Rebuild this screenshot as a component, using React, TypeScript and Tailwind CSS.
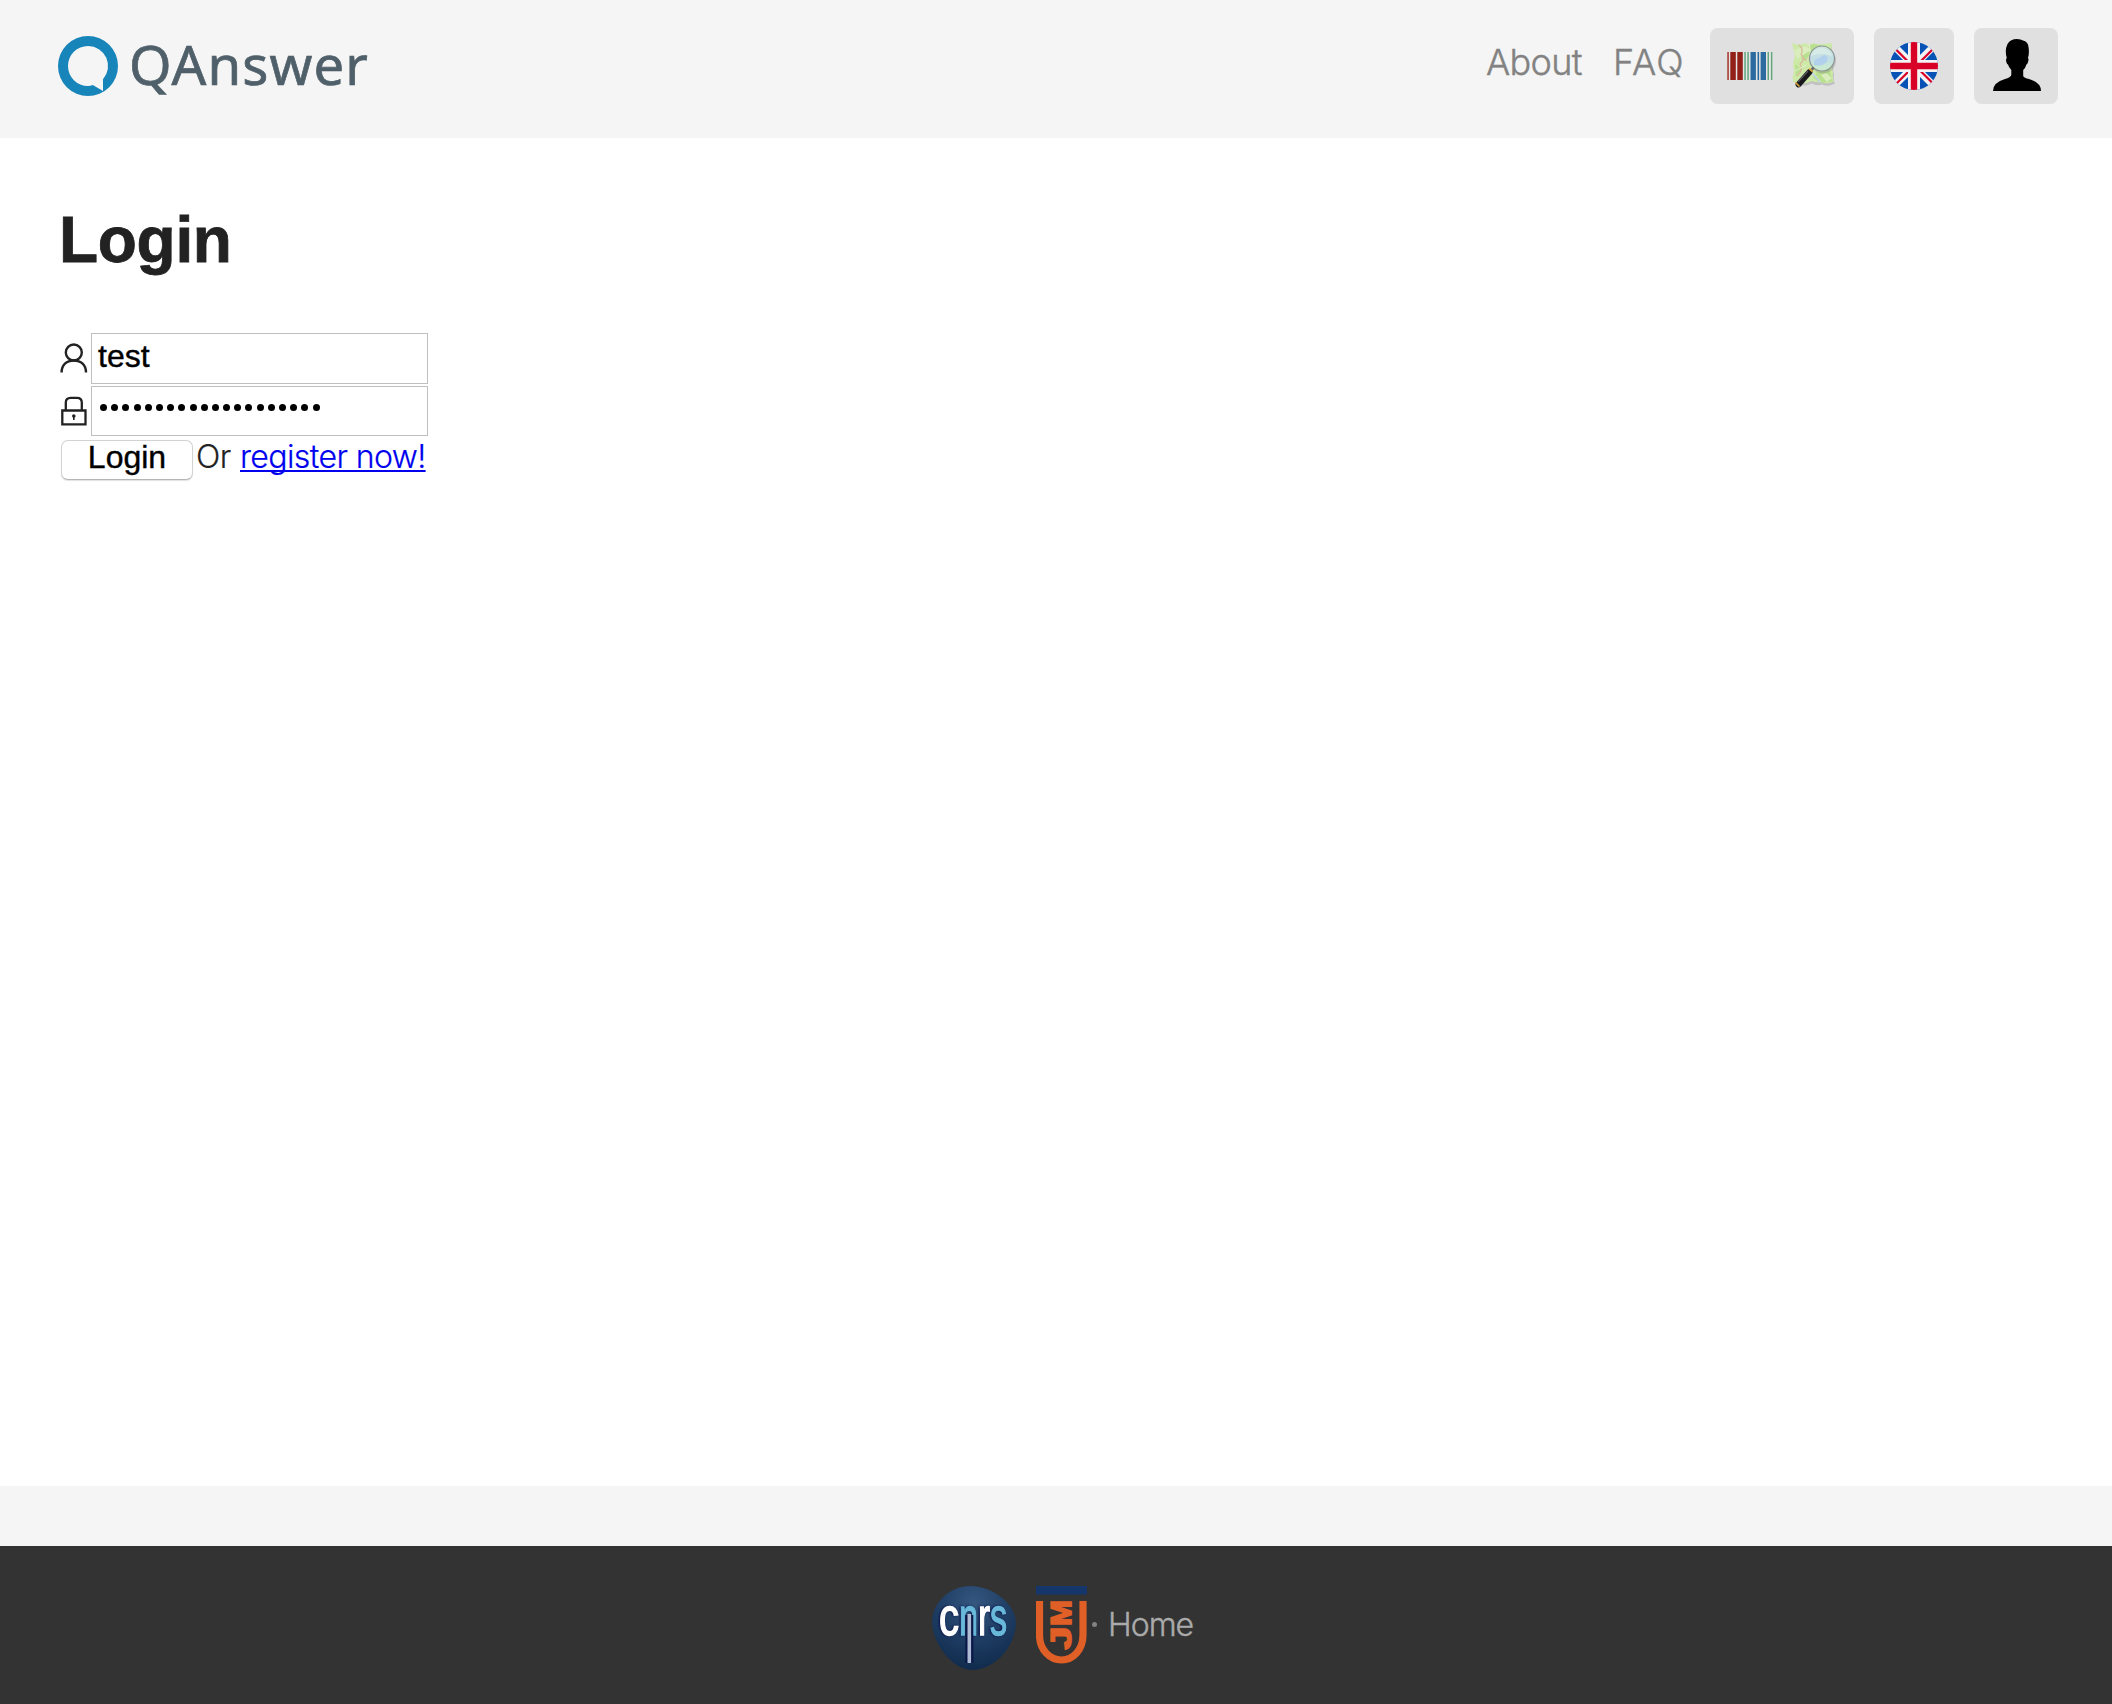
import React from 'react';

function Logo() {
  return (
    <div className="flex items-start">
      <svg className="h-[60px] w-[60px]" viewBox="0 0 60 60">
        <path
          fillRule="evenodd"
          fill="#1785b9"
          d="M30 0a30 30 0 1 1 0 60a30 30 0 0 1 0-60ZM30 10A20 20 0 0 0 30 50Q32.5 50 34.8 49L45 55V43.3A20 20 0 0 0 30 10Z"
        />
      </svg>
      <span className="ml-[11px] font-['Noto_Sans'] text-[54.5px] leading-[56px] tracking-[1.1px] text-[#50606a] [-webkit-text-stroke:0.7px_#50606a]">
        QAnswer
      </span>
    </div>
  );
}

const BARS: [number, number, string][] = [
  [0, 1.5, '#a3302a'],
  [3, 5.5, '#921f18'],
  [10, 5.5, '#921f18'],
  [17, 1.5, '#62a67c'],
  [20, 1.5, '#62a67c'],
  [23.2, 5.4, '#2b6b9f'],
  [30.2, 1.6, '#2b6b9f'],
  [33.3, 5.4, '#2b6b9f'],
  [40.2, 1.5, '#62a67c'],
  [43.6, 1.5, '#62a67c'],
];

function Barcode() {
  return (
    <svg className="h-[28px] w-[46px]" viewBox="0 0 46 28">
      <rect width="46" height="28" fill="#e6e6e6" />
      {BARS.map(([x, w, c]) => (
        <rect key={x} x={x + 0.3} width={w} height="28" fill={c} />
      ))}
    </svg>
  );
}

function MapIcon() {
  return (
    <svg className="h-[48px] w-[48px]" viewBox="0 0 48 48">
      <defs>
        <linearGradient id="lens" x1="0" y1="0" x2="0" y2="1">
          <stop offset="0" stopColor="#cfe6dd" />
          <stop offset=".5" stopColor="#c2dde4" />
          <stop offset="1" stopColor="#ccefcb" />
        </linearGradient>
      </defs>
      <path d="M2 3Q8 4 12 2Q17 4 21 2Q26 5 31 3L40 2Q39 10 42 16Q40 24 42 31Q41 37 43 40Q36 44 30 41Q24 43 20 40Q12 44 4 41Q2 35 4 29Q1 20 4 14Z" fill="#888" opacity=".35" transform="translate(0 1.5)" />
      <path d="M0 1Q8 4 13 1Q17 4 21 1Q26 4 31 2L40 1Q39 10 41 16Q39 24 41 31Q40 37 42 39Q36 43 30 40Q24 41 20 39Q12 43 1 40Q0 35 2 29Q0 20 3 14Z" fill="#cde9a8" />
      <path d="M20 2L30 3L13 19L8 13ZM3 22L10 27L4 35ZM25 30L37 27L41 39L30 41L21 36Z" fill="#b9e08f" />
      <path d="M2 8L14 4L19 8L5 17ZM29 33L34 31L40 36L35 40Z" fill="#d9edbd" />
      <path d="M7 3Q12 7 9 12Q14 17 8 22Q12 28 5 34M10 16Q15 20 17 15" fill="none" stroke="#d9b99c" strokeWidth="1.2" />
      <path d="M17 2Q20 13 15 18M21 31L29 40M3 29L14 23" fill="none" stroke="#e4f0cf" strokeWidth="1" />
      <path d="M19 30L28 40" stroke="#b9cfe8" strokeWidth="1.5" />
      <circle cx="31" cy="18.5" r="13" fill="#777" opacity=".3" />
      <circle cx="30" cy="16.5" r="12.5" fill="url(#lens)" stroke="#8d9594" strokeWidth="1.2" />
      <path d="M22 19Q25 16 28 16Q32 11 35 14Q37 19 32 22Q28 25 22 23Z" fill="#abccf0" opacity=".8" />
      <path d="M19 14Q21 6 30 6Q38 7 40 14Q30 10 19 14Z" fill="#e0f1ec" opacity=".6" />
      <path d="M18 30L21.5 25.5" stroke="#666" strokeWidth="2.6" />
      <path d="M6.5 42.5L17.5 30" stroke="#17171c" strokeWidth="5.8" strokeLinecap="round" />
      <path d="M6 40L16 29" stroke="#57575d" strokeWidth="1.2" />
      <path d="M3.5 40.5L7.5 44.5M17 26.5L20.5 29.5" stroke="#d8a73c" strokeWidth="1.7" />
    </svg>
  );
}

function Flag() {
  return (
    <svg className="h-[48px] w-[48px]" viewBox="0 0 48 48">
      <clipPath id="disc"><circle cx="24" cy="24" r="24" /></clipPath>
      <g clipPath="url(#disc)">
        <rect width="48" height="48" fill="#0753b5" />
        <path d="M4 4L44 44M44 4L4 44" stroke="#f3f3f3" strokeWidth="7" />
        <path d="M6.5 8L22 23.5M44 6L27 23M27 25.5L44 42.5M4 44L21 27" stroke="#d80027" strokeWidth="2.2" />
        <path d="M24 0V48M0 24H48" stroke="#f3f3f3" strokeWidth="12" />
        <path d="M24 0V48M0 24H48" stroke="#d80027" strokeWidth="6.4" />
      </g>
    </svg>
  );
}

function Silhouette() {
  return (
    <svg className="h-[52px] w-[48px]" viewBox="0 0 48 52">
      <path d="M24 0Q28 0 30 1.5Q35 2.5 35.5 8Q36.5 14 35 19Q36 20 35 23Q34.5 25 33.4 25.5Q32.5 29 30.2 31V37Q31 39 36 40Q48 43.5 48 52H0Q0 43.5 12 40Q17.5 38.5 18.3 36V31Q15.8 28.5 15 25.5Q13.7 25 13.2 22.5Q12.7 20 13.8 19Q11.5 11 14.5 5Q17.5 0 24 0Z" />
    </svg>
  );
}

function Header() {
  return (
    <header className="flex h-[138px] items-start justify-between bg-[#f5f5f5] pl-[58px] pr-[54px]">
      <div className="pt-9"><Logo /></div>
      <div className="flex pt-7">
        <nav className="flex pt-[10px] font-['Inter'] text-[36px] leading-[48px] font-light text-[#828282] [-webkit-text-stroke:0.4px_#828282]">
          <a className="w-[127px] tracking-[-0.7px]">About</a>
          <a className="w-[97px] tracking-[1.1px]">FAQ</a>
        </nav>
        <div className="flex h-[76px] w-[144px] items-center rounded-lg bg-[#e0e0e0] pl-[17px]">
          <Barcode />
          <div className="ml-[19px]"><MapIcon /></div>
        </div>
        <div className="ml-5 flex h-[76px] w-[80px] items-center justify-center rounded-lg bg-[#e0e0e0]"><Flag /></div>
        <div className="ml-5 flex h-[76px] w-[84px] items-start rounded-lg bg-[#e0e0e0] pt-[11px] pl-[19px]"><Silhouette /></div>
      </div>
    </header>
  );
}

function UserIcon() {
  return (
    <svg className="h-[30px] w-[28px]" viewBox="0 0 28 30" fill="none" stroke="#222" strokeWidth="2.4">
      <circle cx="13.8" cy="9.5" r="8" />
      <path d="M1.6 29.5C1.6 22 6.5 17.5 13.8 17.5S26 22 26 29.5" />
    </svg>
  );
}

function LockIcon() {
  return (
    <svg className="h-[30px] w-[28px]" viewBox="0 0 28 30" fill="none" stroke="#222" strokeWidth="2.3">
      <path d="M2.3 14.5H25.5V28.3H2.3Z" />
      <path d="M5.8 14V6.5Q5.8 1.8 10.5 1.8H17Q21.8 1.8 21.8 6.5V14" />
      <circle cx="13.8" cy="20" r="1.8" fill="#222" stroke="none" />
      <path d="M13.8 20V24" strokeWidth="1.6" />
    </svg>
  );
}

function LoginForm() {
  return (
    <main className="h-[1348px] bg-white pl-[60px]">
      <h1 className="-ml-px pt-[70px] font-['Liberation_Sans'] text-[64px] leading-[64px] font-bold tracking-[-0.3px] text-[#222] [-webkit-text-stroke:0.8px_#222]">Login</h1>
      <div className="mt-[61px] flex h-[51px]">
        <div className="w-[31px] pt-[10px]"><UserIcon /></div>
        <div className="w-[337px] border border-[#bfbfbf] pl-[6px] font-['Liberation_Sans'] text-[32px] leading-[44px] text-black [-webkit-text-stroke:0.4px_black]">test</div>
      </div>
      <div className="mt-[2px] flex h-[50px]">
        <div className="w-[31px] pt-[10px]"><LockIcon /></div>
        <div className="flex w-[337px] gap-[4.2px] border border-[#bfbfbf] pt-[17px] pl-[8px]">
          {Array.from({ length: 20 }, (_, i) => (
            <span key={i} className="h-[7px] w-[7px] shrink-0 rounded-full bg-black" />
          ))}
        </div>
      </div>
      <div className="mt-[4px] flex items-start">
        <button className="ml-px flex h-[40px] w-[132px] items-start justify-center rounded-[7px] border border-[#d2d2d2] border-b-[#b5b5b5] bg-white font-['Liberation_Sans'] text-[32px] leading-[32px] text-black shadow-[0_1px_1px_rgba(0,0,0,0.12)] [-webkit-text-stroke:0.4px_black]">
          Login
        </button>
        <p className="ml-[3px] pt-px font-['Inter'] text-[32px] leading-[32px] font-light tracking-[-0.6px] text-[#222] [-webkit-text-stroke:0.2px_currentColor]">
          Or <a className="ml-px text-[#0000ee] underline decoration-2 underline-offset-[2px] [text-decoration-skip-ink:none]">register now!</a>
        </p>
      </div>
    </main>
  );
}

function CnrsLogo() {
  return (
    <svg className="h-[84px] w-[84px]" viewBox="0 0 84 84">
      <defs>
        <radialGradient id="globe" cx=".5" cy=".2" r=".8">
          <stop offset="0" stopColor="#35577f" />
          <stop offset=".5" stopColor="#203f66" />
          <stop offset="1" stopColor="#102b4c" />
        </radialGradient>
      </defs>
      <path d="M38 0C60 0 84 17 84 38C83 61 62 84 40 84C20 84 0 57 0 35C1 15 19 0 38 0Z" fill="url(#globe)" />
      <g className="font-['Liberation_Sans'] text-[53px] drop-shadow-[-1px_0px_1px_#080f48]" strokeWidth="1.5">
        <text x="7" y="48.5" fill="#fff" stroke="#fff" textLength="20" lengthAdjust="spacingAndGlyphs">c</text>
        <text x="27" y="48.5" fill="#69b9da" stroke="#69b9da" textLength="19" lengthAdjust="spacingAndGlyphs">n</text>
        <text x="46" y="48.5" fill="#fff" stroke="#fff" textLength="12" lengthAdjust="spacingAndGlyphs">r</text>
        <text x="58" y="48.5" fill="#69b9da" stroke="#69b9da" textLength="17" lengthAdjust="spacingAndGlyphs">s</text>
      </g>
      <path d="M37.3 29V77" stroke="#0b1748" strokeWidth="8" />
      <path d="M37.3 28V77" stroke="#aebbd2" strokeWidth="3.6" />
    </svg>
  );
}

function UjmLogo() {
  return (
    <svg className="h-[78px] w-[51px]" viewBox="0 0 51 78">
      <rect width="51" height="8.5" fill="#15366b" />
      <path d="M3.5 15V49C3.5 64 14 74 25.5 74S47 64 47 49V15" fill="none" stroke="#e05f27" strokeWidth="7.2" />
      <g fill="#e05f27" stroke="#e05f27" strokeWidth="1.6" fontFamily="Liberation Sans" fontSize="29" fontWeight="bold">
        <text transform="translate(35.3 63.5) rotate(-90)" textLength="23" lengthAdjust="spacingAndGlyphs">J</text>
        <text transform="translate(35.3 40) rotate(-90)" textLength="26" lengthAdjust="spacingAndGlyphs">M</text>
      </g>
    </svg>
  );
}

export default function App() {
  return (
    <div className="min-h-[1704px] w-full bg-white">
      <Header />
      <LoginForm />
      <div className="h-[60px] bg-[#f5f5f5]" />
      <footer className="flex h-[158px] items-start bg-[#333] pt-10 pl-[932px]">
        <CnrsLogo />
        <div className="ml-5"><UjmLogo /></div>
        <span className="mt-[36px] ml-[5px] h-[5px] w-[5px] rounded-full bg-[#828282]" />
        <a className="mt-[19px] ml-[11px] font-['Inter'] text-[32px] leading-[40px] font-light tracking-[-1px] text-[#aaa] [-webkit-text-stroke:0.4px_#aaa]">Home</a>
      </footer>
    </div>
  );
}
